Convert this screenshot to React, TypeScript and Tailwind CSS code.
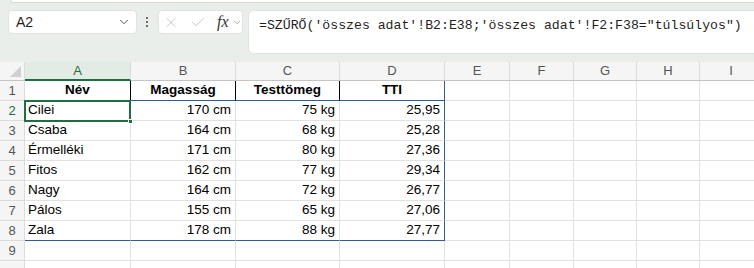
import { ChevronDown, X, Check } from "lucide-react";

const COLS = [
  { id: "A", w: 106 },
  { id: "B", w: 105 },
  { id: "C", w: 104 },
  { id: "D", w: 105 },
  { id: "E", w: 65 },
  { id: "F", w: 64 },
  { id: "G", w: 63 },
  { id: "H", w: 63 },
  { id: "I", w: 63 },
];

const HEAD = ["Név", "Magasság", "Testtömeg", "TTI"];

const ROWS = [
  ["Cilei", "170 cm", "75 kg", "25,95"],
  ["Csaba", "164 cm", "68 kg", "25,28"],
  ["Érmelléki", "171 cm", "80 kg", "27,36"],
  ["Fitos", "162 cm", "77 kg", "29,34"],
  ["Nagy", "164 cm", "72 kg", "26,77"],
  ["Pálos", "155 cm", "65 kg", "27,06"],
  ["Zala", "178 cm", "88 kg", "27,77"],
];

const FORMULA = `=SZŰRŐ('összes adat'!B2:E38;'összes adat'!F2:F38="túlsúlyos")`;

const Toolbar = () => (
  <div className="relative h-[62px] bg-[#eaeeea]">
    <div className="ml-[10px] h-[3px] rounded-bl-[4px] border-b border-l border-[#d6dbd6] bg-white" />
    <div className="absolute left-[8px] top-[10px] flex h-[24px] w-[129px] items-center justify-between rounded-[4px] border border-[#e0e3e0] bg-white pl-[7px] pr-[5px]">
      <span className="text-[14px] text-[#1f1f1f]">A2</span>
      <ChevronDown size={14} strokeWidth={1.6} className="text-[#444]" />
    </div>
    <div className="absolute left-[146px] top-[17px] flex flex-col gap-[2px]">
      <span className="h-[2px] w-[2px] rounded-full bg-[#444]" />
      <span className="h-[2px] w-[2px] rounded-full bg-[#444]" />
      <span className="h-[2px] w-[2px] rounded-full bg-[#444]" />
    </div>
    <div className="absolute left-[158px] top-[10px] flex h-[24px] w-[85px] items-center gap-[5px] rounded-[4px] border border-[#e0e3e0] bg-white pl-[4px]">
      <X size={17} strokeWidth={1.2} className="text-[#b9b9b9]" />
      <Check size={17} strokeWidth={1.2} className="ml-[6px] text-[#b9b9b9]" />
      <span className="ml-[6px] font-['Liberation_Serif',serif] text-[16px] italic leading-none text-[#333]">
        fx
      </span>
      <ChevronDown size={11} strokeWidth={1.5} className="-ml-[2px] text-[#888]" />
    </div>
    <div className="absolute left-[248px] right-[-4px] top-[10px] h-[44px] rounded-[5px] border border-[#e0e3e0] bg-white pl-[10px] pt-[1px]">
      <span className="whitespace-pre font-['Liberation_Mono',monospace] text-[13.2px] leading-[20px] text-[#1f1f1f]">
        {FORMULA}
      </span>
    </div>
  </div>
);

const cellText = (col: number) =>
  col === 0 ? "justify-start pl-[3px]" : "justify-end pr-[4px]";

const Grid = () => (
  <div className="relative">
    <div className="flex h-[19px] border-b border-[#c4c4c4] bg-[#f5f5f5]">
      <div className="relative h-full w-[25px] shrink-0 border-r border-[#dcdcdc]">
        <div className="absolute bottom-[3px] right-[3px] h-0 w-0 border-b-[11px] border-l-[11px] border-b-[#d0d0d0] border-l-transparent" />
      </div>
      {COLS.map((c, i) => (
        <div
          key={c.id}
          style={{ width: c.w }}
          className={`flex shrink-0 items-center justify-center border-r border-[#dcdcdc] text-[13px] ${
            i === 0
              ? "-mb-px border-b-2 border-b-[#1e6e42] bg-[#e3ebe5] text-[#1e6e42]"
              : "text-[#555]"
          }`}
        >
          {c.id}
        </div>
      ))}
    </div>
    {Array.from({ length: 10 }).map((_, r) => {
      const data = r === 0 ? HEAD : ROWS[r - 1];
      return (
        <div key={r} className="flex h-[20px]">
          <div
            className={`flex w-[25px] shrink-0 items-center justify-center border-r border-b border-[#dcdcdc] bg-[#f5f5f5] text-[13px] ${
              r === 1 ? "text-[#1e6e42]" : "text-[#555]"
            }`}
          >
            {r < 9 ? r + 1 : ""}
          </div>
          {COLS.map((c, i) => {
            const val = data && i < 4 ? data[i] : "";
            let border = "border-r border-b border-[#e1e1e1]";
            if (r === 0 && i < 4) {
              border = `border-b border-b-[#2f5d97] border-r ${
                i === 3 ? "border-r-[#2f5d97]" : "border-r-black"
              }`;
            } else if (data && i < 4) {
              border = `border-r border-b ${
                i === 3 ? "border-r-[#2f5d97]" : "border-r-[#e1e1e1]"
              } ${r === 7 ? "border-b-[#2f5d97]" : "border-b-[#e1e1e1]"}`;
            }
            return (
              <div
                key={c.id}
                style={{ width: c.w }}
                className={`flex shrink-0 items-center overflow-hidden whitespace-nowrap text-[13.5px] text-black ${border} ${
                  r === 0 ? "justify-center font-bold" : cellText(i)
                }`}
              >
                {val}
              </div>
            );
          })}
        </div>
      );
    })}
    <div className="pointer-events-none absolute left-[24px] top-[38px] h-[22px] w-[107px] border-2 border-[#1e6e42]">
      <div className="absolute -bottom-[4px] -right-[4px] h-[5px] w-[5px] border border-white bg-[#1e6e42]" />
    </div>
  </div>
);

export default function App() {
  return (
    <div className="h-[268px] w-[754px] overflow-hidden bg-white font-['Liberation_Sans',sans-serif]">
      <Toolbar />
      <Grid />
    </div>
  );
}
